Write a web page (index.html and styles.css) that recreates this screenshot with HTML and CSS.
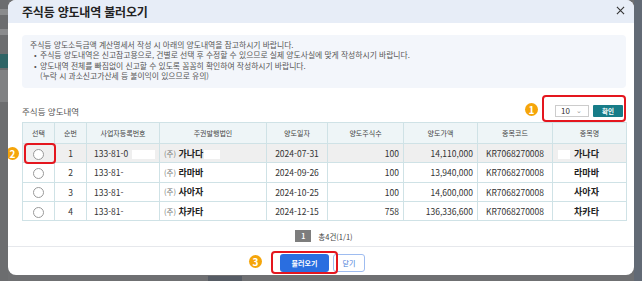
FILE: index.html
```html
<!DOCTYPE html>
<html lang="ko">
<head>
    <meta charset="UTF-8">
    <title>주식등 양도내역 불러오기</title>
    <link rel="stylesheet" href="styles.css">
</head>
<body>
    <div class="screen">
        <div class="behind-left">
            <span class="ghost"></span>
            <span class="ghost"></span>
            <span class="ghost-band"></span>
            <span class="ghost-pane"></span>
        </div>

        <div class="modal-col">
            <div class="modal">
                <div class="modal-head">
                    <h1>주식등 양도내역 불러오기</h1>
                    <button class="close" aria-label="닫기">
                        <svg width="9" height="9" viewBox="0 0 10 10"><path d="M1 1L9 9M9 1L1 9" stroke="#333" stroke-width="1.2" fill="none"/></svg>
                    </button>
                </div>

                <div class="modal-body">
                    <div class="notice">
                        <p>주식등 양도소득금액 계산명세서 작성 시 아래의 양도내역을 참고하시기 바랍니다.</p>
                        <ul>
                            <li>주식등 양도내역은 신고참고용으로, 건별로 선택 후 수정할 수 있으므로 실제 양도사실에 맞게 작성하시기 바랍니다.</li>
                            <li>양도내역 전체를 빠짐없이 신고할 수 있도록 꼼꼼히 확인하여 작성하시기 바랍니다.<br>(누락 시 과소신고가산세 등 불이익이 있으므로 유의)</li>
                        </ul>
                    </div>

                    <div class="list-bar">
                        <span class="list-title">주식등 양도내역</span>
                        <div class="list-tools">
                            <span class="badge badge-1">1</span>
                            <div class="select">10 <span class="caret">⌄</span></div>
                            <button class="btn-ok">확인</button>
                            <span class="redbox redbox-1"></span>
                        </div>
                    </div>

                    <table class="grid">
                        <colgroup>
                            <col style="width:32px"><col style="width:32px"><col style="width:73px">
                            <col style="width:107px"><col style="width:61px"><col style="width:76px">
                            <col style="width:74px"><col style="width:75px"><col style="width:74px">
                        </colgroup>
                        <thead>
                            <tr>
                                <th>선택</th><th>순번</th><th>사업자등록번호</th><th>주권발행법인</th><th>양도일자</th>
                                <th>양도주식수</th><th>양도가액</th><th>종목코드</th><th>종목명</th>
                            </tr>
                        </thead>
                        <tbody>
                            <tr class="on">
                                <td class="pick"><span class="badge badge-2">2</span><span class="radio"></span><span class="redbox redbox-2"></span></td>
                                <td class="c">1</td>
                                <td class="l">133-81-0<span class="mask mask-a"></span></td>
                                <td class="l"><span class="corp">(주)</span> <b>가나다</b><span class="mask mask-b"></span></td>
                                <td class="c">2024-07-31</td>
                                <td class="r">100</td>
                                <td class="r">14,110,000</td>
                                <td class="c">KR7068270008</td>
                                <td class="c name"><span class="mask mask-c"></span><b>가나다</b></td>
                            </tr>
                            <tr>
                                <td class="pick"><span class="radio"></span></td>
                                <td class="c">2</td>
                                <td class="l">133-81-</td>
                                <td class="l"><span class="corp">(주)</span> <b>라마바</b></td>
                                <td class="c">2024-09-26</td>
                                <td class="r">100</td>
                                <td class="r">13,940,000</td>
                                <td class="c">KR7068270008</td>
                                <td class="c name"><b>라마바</b></td>
                            </tr>
                            <tr>
                                <td class="pick"><span class="radio"></span></td>
                                <td class="c">3</td>
                                <td class="l">133-81-</td>
                                <td class="l"><span class="corp">(주)</span> <b>사아자</b></td>
                                <td class="c">2024-10-25</td>
                                <td class="r">100</td>
                                <td class="r">14,600,000</td>
                                <td class="c">KR7068270008</td>
                                <td class="c name"><b>사아자</b></td>
                            </tr>
                            <tr>
                                <td class="pick"><span class="radio"></span></td>
                                <td class="c">4</td>
                                <td class="l">133-81-</td>
                                <td class="l"><span class="corp">(주)</span> <b>차카타</b></td>
                                <td class="c">2024-12-15</td>
                                <td class="r">758</td>
                                <td class="r">136,336,600</td>
                                <td class="c">KR7068270008</td>
                                <td class="c name"><b>차카타</b></td>
                            </tr>
                        </tbody>
                    </table>

                    <div class="pager">
                        <span class="page-num">1</span>
                        <span class="page-info">총4건(1/1)</span>
                    </div>
                </div>

                <div class="modal-foot">
                    <div class="foot-btns">
                        <span class="badge badge-3">3</span>
                        <button class="btn-load">불러오기</button>
                        <button class="btn-close">닫기</button>
                        <span class="redbox redbox-3"></span>
                    </div>
                </div>
            </div>
            <div class="behind-bottom"><span class="ghost-tab"></span></div>
        </div>

        <div class="behind-right"></div>
    </div>
</body>
</html>
```

FILE: styles.css
```css
body {
    margin: 0;
    padding: 0;
    width: 642px;
    height: 281px;
    overflow: hidden;
    background-color: #6f7072;
    font-family: "Noto Sans CJK KR", "Noto Sans", sans-serif;
    color: #333;
}

.screen {
    display: flex;
    height: 281px;
}

/* dimmed page behind the popup */
.behind-left {
    width: 8px;
    display: flex;
    flex-direction: column;
    background-color: #6c6d6f;
}

.ghost {
    height: 6px;
    margin: 9px 0 5px;
    background-color: #8a8b8d;
}

.ghost-band {
    height: 14px;
    margin-top: 14px;
    background-color: #2f6466;
}

.ghost-pane {
    height: 32px;
    margin-top: 2px;
    background-color: #808183;
}

.behind-right {
    width: 8px;
    background-color: #626a75;
}

.modal-col {
    width: 626px;
    display: flex;
    flex-direction: column;
}

.behind-bottom {
    flex: 1;
    position: relative;
}

.ghost-tab {
    position: absolute;
    left: 200px;
    top: 1px;
    width: 34px;
    height: 6px;
    background-color: #565c64;
}

/* popup */
.modal {
    height: 275px;
    background-color: #fff;
    border-radius: 8px;
    overflow: hidden;
    display: flex;
    flex-direction: column;
}

.modal-head {
    height: 23px;
    background-color: #e7edf7;
    display: flex;
    align-items: center;
    justify-content: space-between;
    padding: 0 8px 0 14px;
}

.modal-head h1 {
    margin: 0;
    font-size: 12px;
    font-weight: 700;
    color: #222;
    letter-spacing: -0.2px;
}

.close {
    border: none;
    background: none;
    padding: 0;
    width: 12px;
    height: 12px;
    display: flex;
    align-items: center;
    justify-content: center;
    margin-top: -3px;
}

.modal-body {
    padding: 0 8px 0 14px;
    border-bottom: 1px solid #e6e8ec;
}

.notice {
    margin-top: 12px;
    height: 53px;
    box-sizing: border-box;
    padding: 5px 8px 0;
    background-color: #f3f6fb;
    border-radius: 4px;
    font-size: 7.8px;
    line-height: 10.3px;
    color: #555;
}

.notice p {
    margin: 0;
}

.notice ul {
    margin: 0;
    padding-left: 10px;
    list-style: none;
}

.notice li {
    position: relative;
}

.notice li::before {
    content: "•";
    position: absolute;
    left: -6px;
}

.list-bar {
    height: 34px;
    display: flex;
    align-items: flex-end;
    justify-content: space-between;
    padding-bottom: 5px;
    box-sizing: border-box;
}

.list-title {
    font-size: 8.5px;
    line-height: 12px;
    color: #555;
}

.list-tools {
    position: relative;
    display: flex;
    align-items: center;
    gap: 4px;
    margin-right: 3px;
}

.select {
    width: 34px;
    height: 12px;
    box-sizing: border-box;
    border: 1px solid #ccc;
    font-size: 8px;
    line-height: 10px;
    padding-left: 5px;
    color: #333;
    display: flex;
    align-items: center;
    gap: 6px;
}

.caret {
    font-size: 7px;
    color: #999;
    line-height: 6px;
    margin-top: -3px;
}

.btn-ok {
    width: 30px;
    height: 12px;
    border: none;
    border-radius: 1px;
    padding: 0;
    background-color: #177c88;
    color: #fff;
    font-family: inherit;
    font-size: 6.5px;
    font-weight: 700;
}

/* annotation marks */
.redbox {
    position: absolute;
    border: 2px solid #e4161e;
    border-radius: 4px;
    box-sizing: border-box;
    pointer-events: none;
}

.redbox-1 {
    left: -13px;
    top: -10px;
    width: 84px;
    height: 27px;
}

.redbox-2 {
    left: 1px;
    top: -1px;
    width: 32px;
    height: 21px;
}

.redbox-3 {
    left: -9px;
    top: -3px;
    width: 67px;
    height: 23px;
}

.badge {
    position: absolute;
    width: 13px;
    height: 13px;
    border-radius: 50%;
    background-color: #f5a50a;
    color: #fff;
    font-size: 10px;
    font-weight: 700;
    line-height: 13px;
    text-align: center;
}

.badge-1 {
    left: -30px;
    top: -2px;
}

.badge-2 {
    left: -17px;
    top: 3px;
}

.badge-3 {
    left: -31px;
    top: 1px;
}

/* table */
.grid {
    width: 604px;
    border-collapse: collapse;
    table-layout: fixed;
    font-size: 8.5px;
    color: #333;
}

.grid th, .grid td {
    border: 1px solid #cfe2e6;
    white-space: nowrap;
    overflow: visible;
}

.grid th {
    height: 18px;
    background-color: #eef5f7;
    font-size: 7px;
    font-weight: 400;
    color: #444;
    text-align: center;
}

.grid td {
    height: 18.3px;
    padding: 0 4px;
}

.grid tr.on td {
    background-color: #efefef;
}

.grid td.c { text-align: center; }
.grid td.r { text-align: right; }
.grid td.l { padding-left: 7px; }
.grid td.l:nth-child(4) { padding-left: 4px; }
.grid td.name { padding-right: 10px; }

.grid b {
    font-size: 9px;
    font-weight: 700;
    color: #222;
}

.corp {
    font-size: 7.5px;
    color: #777;
}

.pick {
    position: relative;
    text-align: center;
}

.radio {
    display: inline-block;
    width: 9px;
    height: 9px;
    border: 1px solid #999;
    border-radius: 50%;
    background-color: #fff;
    vertical-align: middle;
}

.mask {
    display: inline-block;
    height: 9px;
    background-color: #fff;
    vertical-align: middle;
}

.mask-a { width: 23px; margin-left: 4px; }
.mask-b { width: 16px; margin-left: 1px; }
.mask-c { width: 12px; margin-left: -16px; margin-right: 4px; }

.pager {
    display: flex;
    align-items: center;
    justify-content: center;
    gap: 7px;
    height: 12px;
    margin: 9px 0 4px;
}

.page-num {
    width: 16px;
    height: 12px;
    background-color: #7d7d7d;
    color: #fff;
    font-size: 7px;
    font-weight: 700;
    line-height: 12px;
    text-align: center;
}

.page-info {
    font-size: 7.5px;
    color: #444;
}

.modal-foot {
    flex: 1;
    display: flex;
    justify-content: center;
    padding-top: 7px;
    padding-left: 3px;
}

.foot-btns {
    position: relative;
    display: flex;
    gap: 4px;
    height: 18px;
}

.btn-load, .btn-close {
    height: 18px;
    padding: 0;
    border-radius: 3px;
    font-family: inherit;
    font-size: 7px;
}

.btn-load {
    width: 49px;
    border: none;
    background-color: #2a6ee0;
    color: #fff;
    font-weight: 700;
}

.btn-close {
    width: 32px;
    border: 1px solid #9ebcf0;
    background-color: #fff;
    color: #3f78d8;
}
```
